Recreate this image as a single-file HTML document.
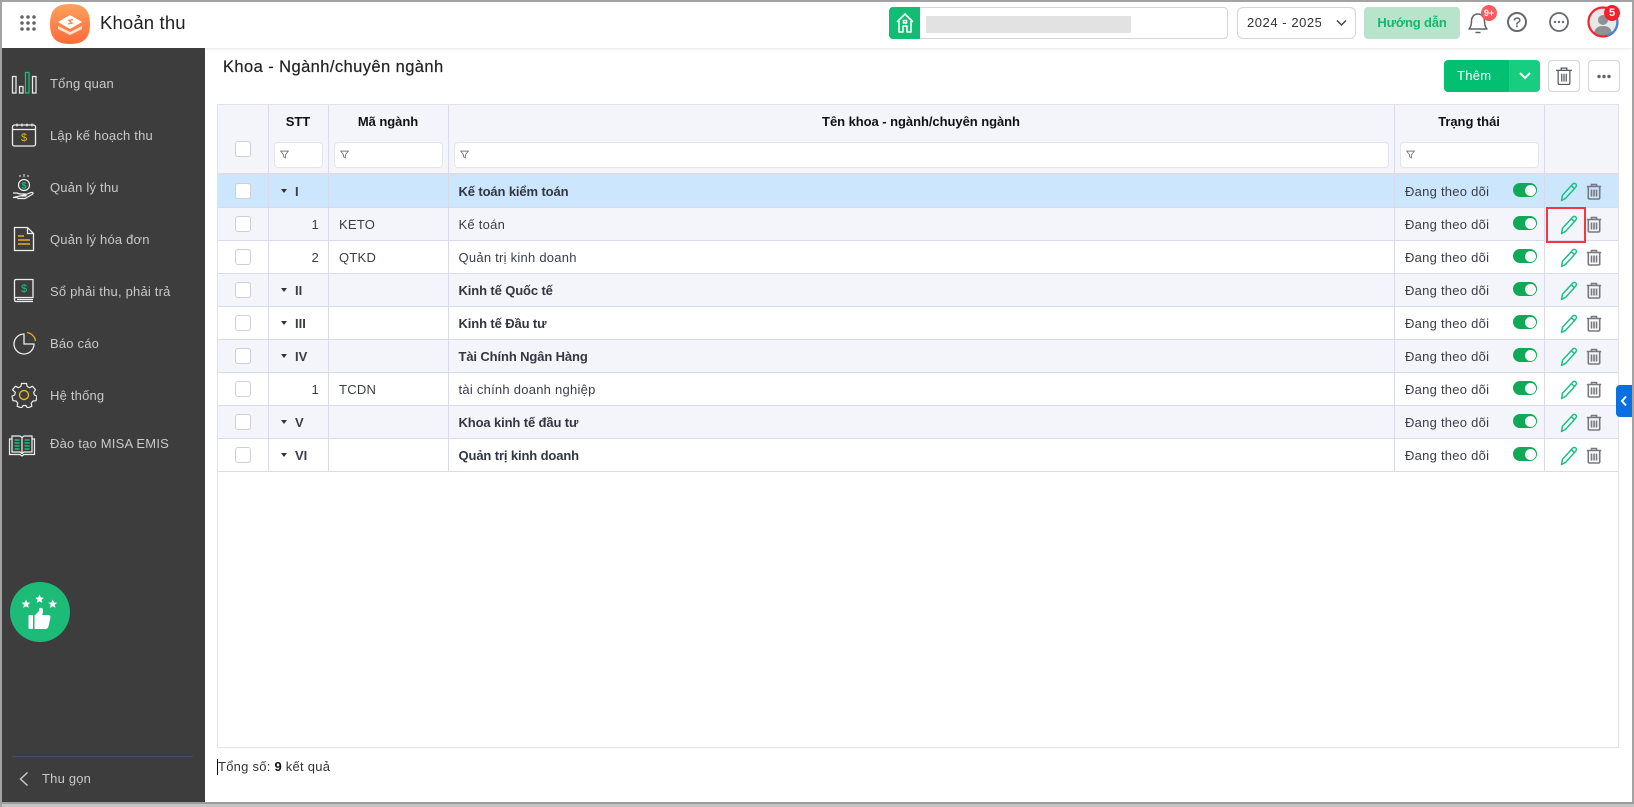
<!DOCTYPE html>
<html lang="vi"><head><meta charset="utf-8"><title>Khoản thu</title>
<style>
*{box-sizing:border-box}
html,body{margin:0;padding:0;width:1634px;height:807px;overflow:hidden;background:#fff;font-family:"Liberation Sans",sans-serif;color:#3a3d48}
.a{position:absolute}
#edgeT{left:0;top:0;width:1634px;height:2px;background:#a3a3a3}
#edgeL{left:0;top:0;width:2px;height:807px;background:#a3a3a3}
#edgeR{left:1632px;top:0;width:2px;height:807px;background:#a3a3a3}
#edgeB{left:0;top:802px;width:1634px;height:5px;background:#c4c4c4;border-top:2px solid #9c9c9c}
#top{left:2px;top:2px;width:1630px;height:46px;background:#fff;box-shadow:0 1px 3px rgba(0,0,0,.1)}
#side{left:2px;top:48px;width:203px;height:754px;background:#3d3d3d}
.nav{position:absolute;left:50px;font-size:13px;line-height:16px;color:#c9c9c9;letter-spacing:.2px;white-space:nowrap}
.btn{position:absolute;border:1px solid #d5d5d5;border-radius:4px;background:#fff}
table{position:absolute;left:217px;top:105px;width:1402px;border-collapse:separate;border-spacing:0;table-layout:fixed;font-size:13px;letter-spacing:.25px}
td,th{padding:0;border-right:1px solid #d9dbec;border-bottom:1px solid #d9dbec;height:33px;position:relative;white-space:nowrap}
td:last-child,th:last-child{border-right:0}
th{background:#f3f5fa;height:70px;border-bottom:2px solid #dcdde6;color:#111;font-size:13px;font-weight:bold;letter-spacing:-.05px}
th span{position:absolute;left:-1px;right:0;top:10px;text-align:center;line-height:14px}
.f{position:absolute;left:5px;right:5px;top:37px;height:26px;background:#fff;border:1px solid #e4e5ec;border-radius:4px}
.f svg{position:absolute;left:5px;top:7px}
.cb{position:absolute;left:18px;top:8px;width:16px;height:16px;border:1px solid #cfcfd4;border-radius:3px;background:#fff}
th .cb{top:36px}
tr.g td{background:#f3f5fa}
tr.w td{background:#fff}
tr.s td{background:#cbe6fd}
tr.b td:nth-child(4){font-weight:bold;color:#333640;letter-spacing:-.12px}
td:nth-child(4){padding-left:9.500px}
td:nth-child(3){padding-left:10px}
td:nth-child(5){padding-left:10px}
td.n{text-align:right;padding-right:9px}
td.r{font-weight:bold;padding-left:26px;letter-spacing:0}
td.r i{position:absolute;left:12px;top:14px;width:0;height:0;border-left:3.5px solid transparent;border-right:3.5px solid transparent;border-top:4px solid #333}
.t{position:absolute;left:118px;top:8px;width:24px;height:14px;border-radius:7px;background:#10a957}
.t:after{content:"";position:absolute;right:1.5px;top:1.5px;width:11px;height:11px;border-radius:50%;background:#fff}
.p{position:absolute;left:15px;top:7px}
.d{position:absolute;left:41px;top:8px}
</style></head><body>
<svg width="0" height="0" style="position:absolute">
<symbol id="pen" viewBox="0 0 18 20"><path d="M1.500 18.500l1-5.200L12.600 2.200c1-1 2.400-1 3.200-.2s.8 2.200-.2 3.200L5.700 16.300zM11.300 3.700l3.300 3" fill="none" stroke="#1cc184" stroke-width="1.500" stroke-linejoin="round"/></symbol>
<symbol id="bin" viewBox="0 0 16 17"><path d="M.8 3.500h14.400M5.500 3V1.500h5V3M2.300 3.500v11.300c0 .7.500 1.200 1.200 1.200h9c.7 0 1.200-.5 1.200-1.200V3.500M5.500 6.500v7M8 6.500v7M10.500 6.500v7" fill="none" stroke="#77797f" stroke-width="1.600"/></symbol>
<symbol id="fil" viewBox="0 0 12 12"><path d="M1 1.500h10L7.300 6.300v4.200L4.700 9V6.300z" fill="#fff" stroke="#777981" stroke-width="1.200"/></symbol>
</svg>

<div class="a" id="top"></div>
<div class="a" id="side"></div>

<svg class="a" style="left:19px;top:14px" width="18" height="18"><g fill="#666"><circle cx="3" cy="3" r="1.800"/><circle cx="9" cy="3" r="1.800"/><circle cx="15" cy="3" r="1.800"/><circle cx="3" cy="9" r="1.800"/><circle cx="9" cy="9" r="1.800"/><circle cx="15" cy="9" r="1.800"/><circle cx="3" cy="15" r="1.800"/><circle cx="9" cy="15" r="1.800"/><circle cx="15" cy="15" r="1.800"/></g></svg>
<svg class="a" style="left:50px;top:4px" width="40" height="40" viewBox="0 0 40 40"><defs><linearGradient id="lg" x1="0" y1="0" x2="0" y2="1"><stop offset="0" stop-color="#ffa05c"/><stop offset="1" stop-color="#fb6a3a"/></linearGradient></defs><path d="M20 0C34 0 40 6 40 20S34 40 20 40 0 34 0 20 6 0 20 0z" fill="url(#lg)"/><path d="M8 22l12 6 12-6v3l-12 6-12-6z" fill="#ffe3cf"/><path d="M8 18l12-7 12 7-12 7z" fill="#fff"/><path d="M23 15.500l-4 1 3 2.500-4 1" fill="none" stroke="#f98a4c" stroke-width="1.400"/></svg>
<div class="a" style="left:100px;top:12px;font-size:18.500px;line-height:22px;color:#222;letter-spacing:.15px">Khoản thu</div>

<div class="a" style="left:889px;top:7px;width:339px;height:32px;border:1px solid #d5d5d5;border-radius:4px;background:#fff"></div>
<div class="a" style="left:889px;top:7px;width:31px;height:32px;background:#10bd72;border-radius:4px 0 0 4px"></div>
<svg class="a" style="left:895px;top:12px" width="20" height="22" viewBox="0 0 20 22"><path d="M2 10L10 2l8 8M4 9v11h4v-6h4v6h4V9M8.500 8.500h3v2.500h-3z" fill="none" stroke="#fff" stroke-width="1.600" stroke-linejoin="round"/></svg>
<div class="a" style="left:926px;top:16px;width:205px;height:17px;background:#e2e2e2"></div>

<div class="a" style="left:1237px;top:7px;width:119px;height:32px;border:1px solid #d5d5d5;border-radius:6px;background:#fff"></div>
<div class="a" style="left:1247px;top:15px;width:74px;overflow:hidden;white-space:nowrap;font-size:13px;line-height:16px;letter-spacing:.55px;color:#333">2024 - 2025</div>
<svg class="a" style="left:1336px;top:19px" width="11" height="8"><path d="M1 1.500l4.500 4.500L10 1.500" fill="none" stroke="#444" stroke-width="1.500"/></svg>

<div class="a" style="left:1364px;top:7px;width:96px;height:32px;background:#b7e4cb;border-radius:4px;color:#17b56e;font-size:13px;font-weight:bold;line-height:32px;text-align:center;letter-spacing:-.15px">Hướng dẫn</div>

<svg class="a" style="left:1467px;top:10px" width="22" height="26" viewBox="0 0 22 26"><path d="M2 19c2-2 2.500-4 2.500-8 0-4 2.500-7 6.500-7s6.500 3 6.500 7c0 4 .5 6 2.500 8zM8.500 22.500h5" fill="none" stroke="#5f6368" stroke-width="1.500" stroke-linejoin="round"/></svg>
<div class="a" style="left:1481px;top:5px;width:16px;height:16px;border-radius:50%;background:#f9595f;color:#fff;font-size:9px;font-weight:bold;line-height:16px;text-align:center">9+</div>
<div class="a" style="left:1507px;top:12px;width:20px;height:20px;border:2px solid #66696e;border-radius:50%;color:#66696e;font-size:14px;line-height:16px;text-align:center;-webkit-text-stroke:.4px #66696e">?</div>
<svg class="a" style="left:1549px;top:12px" width="20" height="20"><circle cx="10" cy="10" r="9" fill="none" stroke="#66696e" stroke-width="1.800"/><g fill="#66696e"><circle cx="6" cy="10" r="1.200"/><circle cx="10" cy="10" r="1.200"/><circle cx="14" cy="10" r="1.200"/></g></svg>
<svg class="a" style="left:1587px;top:6px" width="32" height="32" viewBox="0 0 32 32"><circle cx="16" cy="16" r="14" fill="#e8e8e8"/><circle cx="16" cy="14" r="5" fill="#8f9196"/><path d="M7 27c1-5 4-7 9-7s8 2 9 7c-3 2-6 3-9 3s-6-1-9-3z" fill="#8f9196"/><circle cx="16" cy="16" r="14.500" fill="none" stroke="#f0242d" stroke-width="2.200"/><path d="M29.500 11A14.500 14.500 0 0 1 20 30" fill="none" stroke="#3d86e6" stroke-width="2.200"/></svg>
<div class="a" style="left:1604px;top:5px;width:16px;height:16px;border-radius:50%;background:#f1222b;color:#fff;font-size:11px;font-weight:bold;line-height:16px;text-align:center">5</div>

<!-- sidebar -->
<svg class="a" style="left:10px;top:70px" width="28" height="26" viewBox="0 0 28 26"><g fill="none" stroke="#e8e8e8" stroke-width="1.300"><rect x="2.500" y="6.500" width="3.500" height="16.500"/><rect x="9.500" y="16.500" width="3.500" height="6.500"/><rect x="22.500" y="6.500" width="3.500" height="16.500"/></g><rect x="15.500" y="2.500" width="3.500" height="20.500" fill="none" stroke="#17c07d" stroke-width="1.300"/></svg>
<div class="nav" style="top:76px">Tổng quan</div>
<svg class="a" style="left:11px;top:122px" width="26" height="26" viewBox="0 0 26 26"><rect x="1.500" y="3" width="23" height="21" rx="2" fill="none" stroke="#eee" stroke-width="1.300"/><path d="M1.500 7.500h23M6 1.500v3M11 1.500v3M16 1.500v3M21 1.500v3" stroke="#eee" stroke-width="1.200"/><text x="13" y="19" font-size="11" fill="#e4b120" text-anchor="middle" font-family="Liberation Sans">$</text></svg>
<div class="nav" style="top:128px">Lập kế hoạch thu</div>
<svg class="a" style="left:11px;top:174px" width="26" height="28" viewBox="0 0 26 28"><circle cx="13" cy="11" r="5.500" fill="none" stroke="#eee" stroke-width="1.200"/><text x="13" y="14.500" font-size="9" font-weight="bold" fill="#17c07d" text-anchor="middle" font-family="Liberation Sans">$</text><path d="M9 3v-2M13 3V0M17 3v-2" stroke="#eee"/><path d="M2 19h4l3 1h5c1.500 0 1.500 2 0 2h-3M14 21l6-2.500c2-.5 3 1 1 2l-7 4H7l-1-1H2z" fill="none" stroke="#eee" stroke-width="1.200"/></svg>
<div class="nav" style="top:180px">Quản lý thu</div>
<svg class="a" style="left:13px;top:226px" width="22" height="26" viewBox="0 0 22 26"><path d="M1.500 1.500h13l6 6v17h-19z M14.500 1.500v6h6" fill="none" stroke="#eee" stroke-width="1.300"/><path d="M5 10h6M5 14h12M5 18h12" stroke="#e4b120" stroke-width="1.500"/></svg>
<div class="nav" style="top:232px">Quản lý hóa đơn</div>
<svg class="a" style="left:13px;top:278px" width="22" height="26" viewBox="0 0 22 26"><path d="M3 1.500h17v18H3c-1 0-1.500.8-1.500 2s.5 2 1.500 2h17M1.500 21.500V3c0-1 .5-1.500 1.500-1.500M4 21.500h16" fill="none" stroke="#eee" stroke-width="1.300"/><text x="11" y="14" font-size="11" fill="#17c07d" text-anchor="middle" font-family="Liberation Sans">$</text></svg>
<div class="nav" style="top:284px">Sổ phải thu, phải trả</div>
<svg class="a" style="left:12px;top:331px" width="24" height="24" viewBox="0 0 24 24"><path d="M12 3A10 10 0 1 0 22 13H12z" fill="none" stroke="#eee" stroke-width="1.300"/><path d="M15 1.500A10 10 0 0 1 23.500 10" fill="none" stroke="#e4b120" stroke-width="1.300"/></svg>
<div class="nav" style="top:336px">Báo cáo</div>
<svg class="a" style="left:11px;top:382px" width="26" height="26" viewBox="0 0 26 26"><path d="M10.500 1.500h5l.7 3 2.500 1.200 2.800-1.500 3 3.600-1.800 2.500.7 2.700 2.600 1.200-1 4.500-3 .3-1.800 2.200.7 3-4.300 1.800-1.800-2.500h-2.600l-1.800 2.500-4.300-1.800.7-3-1.800-2.200-3-.3-1-4.500 2.600-1.200.7-2.700L1.500 7.800l3-3.600 2.800 1.500 2.500-1.200z" fill="none" stroke="#eee" stroke-width="1.200" stroke-linejoin="round"/><circle cx="13" cy="13" r="4.500" fill="none" stroke="#e4b120" stroke-width="1.400"/></svg>
<div class="nav" style="top:388px">Hệ thống</div>
<svg class="a" style="left:8px;top:433px" width="28" height="24" viewBox="0 0 28 24"><path d="M4 3h8l2 1.500L16 3h8v16h-8l-2 1.500L12 19H4zM14 4.500v16M4 6H1.500v15.500H12l2 1.500 2-1.500h10.500V6H24" fill="none" stroke="#eee" stroke-width="1.200"/><path d="M6.500 7h5M6.500 10h5M6.500 13h5M6.500 16h5M16.500 7h5M16.500 10h5M16.500 13h5M16.500 16h5" stroke="#17c07d" stroke-width="1.500"/></svg>
<div class="nav" style="top:436px">Đào tạo MISA EMIS</div>

<svg class="a" style="left:10px;top:582px" width="60" height="60" viewBox="0 0 60 60"><circle cx="30" cy="30" r="30" fill="#1cbb77"/><g fill="#fff"><path transform="translate(16 22)" d="M0-4.500L1.300-1.500 4.400-1.300 2 .8 2.800 3.900 0 2.200-2.800 3.900-2 .8-4.400-1.300-1.300-1.500z"/><path transform="translate(29.500 17)" d="M0-4.500L1.300-1.500 4.400-1.300 2 .8 2.800 3.900 0 2.200-2.800 3.900-2 .8-4.400-1.300-1.300-1.500z"/><path transform="translate(42.700 22)" d="M0-4.500L1.300-1.500 4.400-1.300 2 .8 2.800 3.900 0 2.200-2.800 3.900-2 .8-4.400-1.300-1.300-1.500z"/><rect x="18.500" y="33" width="4.500" height="14" rx="1"/><path d="M24.500 33.500l4.500-4.500.5-3c2.500-1 4 1 3.500 3.500l-.8 3.500h6c2 0 2.600 1.400 2.200 3l-1.800 8c-.3 1.500-1.200 3-3 3H24.500z"/></g></svg>
<div class="a" style="left:12px;top:756px;width:181px;height:1px;background:#3e4f66"></div>
<svg class="a" style="left:18px;top:771px" width="12" height="16"><path d="M9.500 1.500L2.500 8l7 6.500" fill="none" stroke="#c8c8c8" stroke-width="1.500"/></svg>
<div class="nav" style="left:42px;top:771px">Thu gọn</div>

<!-- content -->
<div class="a" style="left:223px;top:58px;font-size:16.500px;line-height:18px;color:#222;letter-spacing:.42px;-webkit-text-stroke:.2px #222;white-space:nowrap">Khoa - Ngành/chuyên ngành</div>

<div class="a" style="left:1444px;top:60px;width:65px;height:32px;background:#03bf72;border-radius:4px 0 0 4px;color:#fff;font-size:13px;line-height:32px;padding-left:13px;letter-spacing:.3px">Thêm</div>
<div class="a" style="left:1509px;top:60px;width:31px;height:32px;background:#17cd80;border-radius:0 4px 4px 0"></div>
<svg class="a" style="left:1519px;top:72px" width="12" height="8"><path d="M1 1l5 5 5-5" fill="none" stroke="#fff" stroke-width="2"/></svg>
<div class="btn" style="left:1548px;top:60px;width:32px;height:32px"></div>
<svg class="a" style="left:1555px;top:66px" width="18" height="20" viewBox="0 0 16 17"><path d="M1 3.500h14M5.500 3V1.500h5V3M2.800 3.500v11.300c0 .7.500 1.200 1.200 1.200h8c.7 0 1.200-.5 1.200-1.200V3.500M6 6.500v7M8 6.500v7M10 6.500v7" fill="none" stroke="#55585e" stroke-width="1.100"/></svg>
<div class="btn" style="left:1588px;top:60px;width:32px;height:32px"></div>
<svg class="a" style="left:1596px;top:74px" width="16" height="5"><g fill="#666"><circle cx="3" cy="2.500" r="1.700"/><circle cx="8" cy="2.500" r="1.700"/><circle cx="13" cy="2.500" r="1.700"/></g></svg>

<table>
<colgroup><col style="width:52px"><col style="width:60px"><col style="width:120px"><col style="width:946px"><col style="width:150px"><col style="width:74px"></colgroup>
<tr>
<th><div class="cb"></div></th>
<th><span>STT</span><div class="f"><svg width="9" height="9"><use href="#fil"/></svg></div></th>
<th><span>Mã ngành</span><div class="f"><svg width="9" height="9"><use href="#fil"/></svg></div></th>
<th><span>Tên khoa - ngành/chuyên ngành</span><div class="f"><svg width="9" height="9"><use href="#fil"/></svg></div></th>
<th><span>Trạng thái</span><div class="f"><svg width="9" height="9"><use href="#fil"/></svg></div></th>
<th></th>
</tr>
<tr class="s b"><td><div class="cb"></div></td><td class="r"><i></i>I</td><td></td><td>Kế toán kiểm toán</td><td>Đang theo dõi<div class="t"></div></td><td><svg class="p" width="18" height="20"><use href="#pen"/></svg><svg class="d" width="16" height="17"><use href="#bin"/></svg></td></tr>
<tr class="g"><td><div class="cb"></div></td><td class="n">1</td><td>KETO</td><td>Kế toán</td><td>Đang theo dõi<div class="t"></div></td><td><svg class="p" width="18" height="20"><use href="#pen"/></svg><svg class="d" width="16" height="17"><use href="#bin"/></svg></td></tr>
<tr class="w"><td><div class="cb"></div></td><td class="n">2</td><td>QTKD</td><td>Quản trị kinh doanh</td><td>Đang theo dõi<div class="t"></div></td><td><svg class="p" width="18" height="20"><use href="#pen"/></svg><svg class="d" width="16" height="17"><use href="#bin"/></svg></td></tr>
<tr class="g b"><td><div class="cb"></div></td><td class="r"><i></i>II</td><td></td><td>Kinh tế Quốc tế</td><td>Đang theo dõi<div class="t"></div></td><td><svg class="p" width="18" height="20"><use href="#pen"/></svg><svg class="d" width="16" height="17"><use href="#bin"/></svg></td></tr>
<tr class="w b"><td><div class="cb"></div></td><td class="r"><i></i>III</td><td></td><td>Kinh tế Đầu tư</td><td>Đang theo dõi<div class="t"></div></td><td><svg class="p" width="18" height="20"><use href="#pen"/></svg><svg class="d" width="16" height="17"><use href="#bin"/></svg></td></tr>
<tr class="g b"><td><div class="cb"></div></td><td class="r"><i></i>IV</td><td></td><td>Tài Chính Ngân Hàng</td><td>Đang theo dõi<div class="t"></div></td><td><svg class="p" width="18" height="20"><use href="#pen"/></svg><svg class="d" width="16" height="17"><use href="#bin"/></svg></td></tr>
<tr class="w"><td><div class="cb"></div></td><td class="n">1</td><td>TCDN</td><td>tài chính doanh nghiệp</td><td>Đang theo dõi<div class="t"></div></td><td><svg class="p" width="18" height="20"><use href="#pen"/></svg><svg class="d" width="16" height="17"><use href="#bin"/></svg></td></tr>
<tr class="g b"><td><div class="cb"></div></td><td class="r"><i></i>V</td><td></td><td>Khoa kinh tế đầu tư</td><td>Đang theo dõi<div class="t"></div></td><td><svg class="p" width="18" height="20"><use href="#pen"/></svg><svg class="d" width="16" height="17"><use href="#bin"/></svg></td></tr>
<tr class="w b"><td><div class="cb"></div></td><td class="r"><i></i>VI</td><td></td><td>Quản trị kinh doanh</td><td>Đang theo dõi<div class="t"></div></td><td><svg class="p" width="18" height="20"><use href="#pen"/></svg><svg class="d" width="16" height="17"><use href="#bin"/></svg></td></tr>
</table>
<div class="a" style="left:217px;top:104px;width:1402px;height:644px;border:1px solid #e1e2ea"></div>
<div class="a" style="left:1546px;top:207px;width:40px;height:36px;border:2px solid #f2383e"></div>

<div class="a" style="left:217px;top:759px;width:1px;height:16px;background:#111"></div>
<div class="a" style="left:218px;top:759px;font-size:13px;line-height:16px;letter-spacing:.25px;color:#333">Tổng số: <b style="color:#111">9</b> kết quả</div>

<div class="a" style="left:1616px;top:385px;width:16px;height:32px;background:#0a6fe3;border-radius:4px 0 0 4px"></div>
<svg class="a" style="left:1620px;top:395px" width="8" height="12"><path d="M6 1.500L2 6l4 4.500" fill="none" stroke="#fff" stroke-width="2"/></svg>

<div class="a" id="edgeR"></div><div class="a" id="edgeB"></div><div class="a" id="edgeT"></div><div class="a" id="edgeL"></div>
</body></html>
